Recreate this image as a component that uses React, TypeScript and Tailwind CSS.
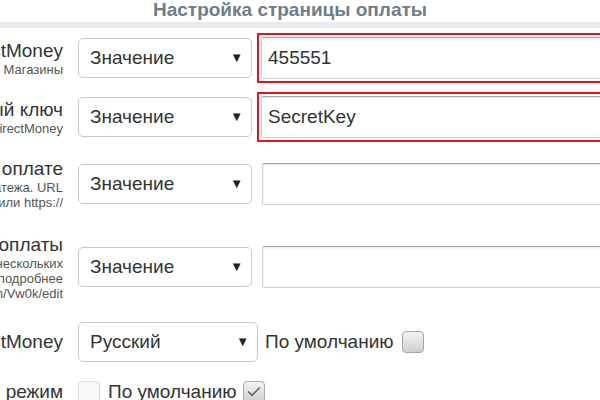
import { Check } from 'lucide-react';

function Label({ title, notes = [] }: { title: string; notes?: string[] }) {
  return (
    <div className="w-[63px] shrink-0 overflow-hidden flex flex-col items-end text-right">
      <span className="whitespace-nowrap text-[19px] leading-[22px] text-[#333]">{title}</span>
      {notes.map((n) => (
        <span key={n} className="whitespace-nowrap text-[13px] leading-[15px] text-[#555]">{n}</span>
      ))}
    </div>
  );
}

function Select({ value, w = 'w-[174px]' }: { value: string; w?: string }) {
  return (
    <div className={`${w} h-[40px] shrink-0 ml-[15px] flex items-center justify-between rounded-[5px] border border-[#c8c8c8] bg-white pl-[11px] pr-[8px]`}>
      <span className="text-[19px] text-[#333]">{value}</span>
      <span className="text-[13px] text-[#222]">▼</span>
    </div>
  );
}

function Input({ value = '' }: { value?: string }) {
  return (
    <div className="h-[42px] w-[400px] flex items-center rounded-[2px] border border-[#cfcfcf] border-t-[#a9a9a9] bg-white px-[6px] shadow-[inset_0_1px_2px_rgb(0_0_0_/_0.12)]">
      <span className="text-[19px] text-[#333]">{value}</span>
    </div>
  );
}

function Box({ checked = false, faint = false }: { checked?: boolean; faint?: boolean }) {
  return (
    <div
      className={`w-[22px] h-[22px] shrink-0 rounded-[4px] border flex items-center justify-center ${
        faint
          ? 'border-[#dcdcdc] bg-[#f8f8f8]'
          : 'border-[#a8a8a8] bg-gradient-to-b from-[#f4f4f4] to-[#cfcfcf]'
      }`}
    >
      {checked && <Check size={16} strokeWidth={2.5} className="text-[#666]" />}
    </div>
  );
}

export default function App() {
  return (
    <div className="w-[600px] h-[400px] overflow-hidden bg-white font-['Liberation_Sans',Arial,sans-serif] text-[#333]">

      {/* Header */}
      <div className="h-[22px] flex justify-center pr-[20px]">
        <h2 className="text-[19px] leading-[20px] font-bold text-[#6f7c89]">Настройка страницы оплаты</h2>
      </div>
      <div className="h-[6px] bg-[#e8ebee]" />

      {/* ID */}
      <div className="h-[60px] flex items-center">
        <Label title="ID DirectMoney" notes={['Получить в разделе  Магазины']} />
        <Select value="Значение" />
        <div className="ml-[5px] border-2 border-[#e8121c] p-[2px]">
          <Input value="455551" />
        </div>
      </div>

      {/* Secret key */}
      <div className="h-[58px] flex items-center">
        <Label title="Секретный ключ" notes={['Секретный ключ DirectMoney']} />
        <Select value="Значение" />
        <div className="ml-[5px] border-2 border-[#e8121c] p-[2px]">
          <Input value="SecretKey" />
        </div>
      </div>

      {/* Success URL */}
      <div className="h-[76px] flex items-center">
        <Label
          title="Страница при оплате"
          notes={['Адрес после платежа. URL', 'начинается с http:// или https://']}
        />
        <Select value="Значение" />
        <div className="ml-[10px]">
          <Input />
        </div>
      </div>

      {/* Description */}
      <div className="h-[90px] flex items-center">
        <Label
          title="Описание оплаты"
          notes={['Можно из нескольких', 'строк, подробнее', 'docs.google.com/Vw0k/edit']}
        />
        <Select value="Значение" />
        <div className="ml-[10px]">
          <Input />
        </div>
      </div>

      {/* Language */}
      <div className="h-[60px] flex items-center">
        <Label title="Язык DirectMoney" />
        <Select value="Русский" w="w-[180px]" />
        <span className="ml-[7px] text-[19px] text-[#333]">По умолчанию</span>
        <div className="ml-[8px]"><Box /></div>
      </div>

      {/* Test mode */}
      <div className="h-[40px] flex items-center">
        <Label title="Тестовый режим" />
        <div className="ml-[15px]"><Box faint /></div>
        <span className="ml-[8px] text-[19px] text-[#333]">По умолчанию</span>
        <div className="ml-[6px]"><Box checked /></div>
      </div>
    </div>
  );
}
